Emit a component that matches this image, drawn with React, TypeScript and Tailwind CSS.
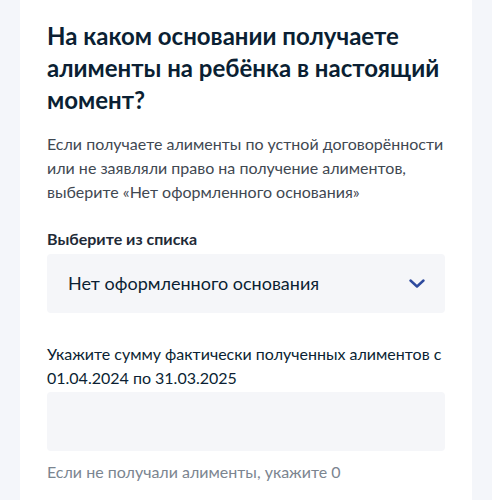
import { useState } from "react";

const font = { fontFamily: "Lato, 'Noto Sans', sans-serif" };

const Chevron = () => (
  <svg width="16" height="9" viewBox="0 0 16 9" fill="none">
    <path d="M1.5 1.5L8 7.5L14.5 1.5" stroke="#2d4a9e" strokeWidth="2.4" strokeLinecap="round" strokeLinejoin="round" />
  </svg>
);

export default function App() {
  const [amount, setAmount] = useState("");

  return (
    <div className="min-h-[500px] w-full bg-[#f4f6fa] px-5" style={font}>
      <div className="min-h-[500px] bg-white px-[27px] pt-5 pb-4">
        <h1 className="text-[24px] font-bold leading-8 text-[#0b1f33]">
          На каком основании получаете алименты на ребёнка в настоящий момент?
        </h1>
        <p className="mt-4 text-[16px] leading-6 text-[#3f4852]">
          Если получаете алименты по устной договорённости или не заявляли право на получение алиментов,
          выберите «Нет оформленного основания»
        </p>

        <div className="mt-6">
          <div className="text-[16px] font-bold leading-[22px] text-[#1f2b38]">Выберите из списка</div>
          <button className="mt-1 flex h-[59px] w-full items-center justify-between rounded-[4px] bg-[#f5f6f9] pl-[21px] pr-[20px] text-left">
            <span className="text-[18px] text-[#0b1f33]">Нет оформленного основания</span>
            <Chevron />
          </button>
        </div>

        <div className="mt-[29px]">
          <div className="text-[16px] leading-6 text-[#0b1f33]">
            Укажите сумму фактически полученных алиментов с 01.04.2024 по 31.03.2025
          </div>
          <input
            value={amount}
            onChange={(e) => setAmount(e.target.value)}
            className="mt-0.5 block h-[59px] w-full rounded-[4px] bg-[#f5f6f9] px-[21px] text-[18px] text-[#0b1f33] outline-none"
          />
          <div className="mt-[9px] text-[16px] leading-6 text-[#7b8590]">Если не получали алименты, укажите 0</div>
        </div>
      </div>
    </div>
  );
}
